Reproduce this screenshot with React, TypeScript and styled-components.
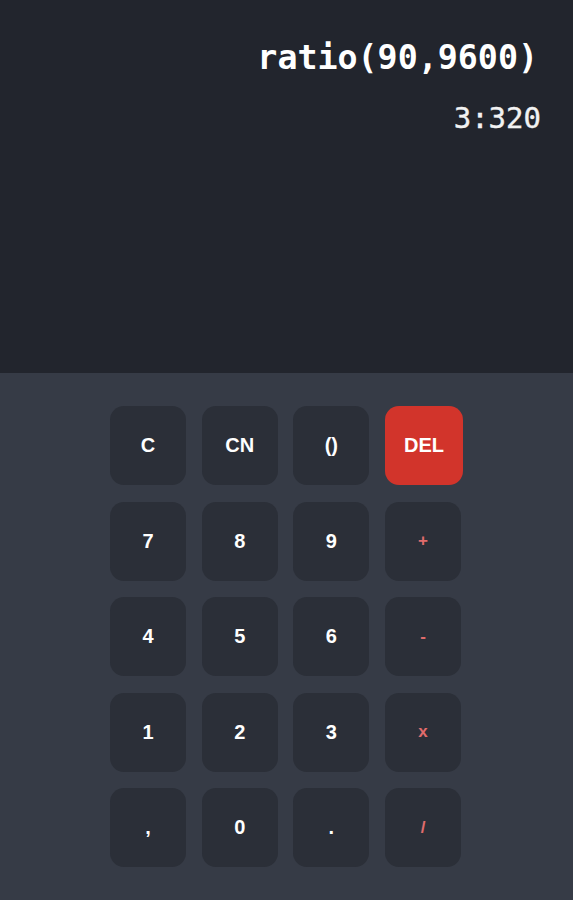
import styled, { createGlobalStyle } from "styled-components";

const GlobalStyle = createGlobalStyle`
  html, body {
    margin: 0;
    padding: 0;
    background: #363b46;
  }
  #root {
    min-height: 100vh;
  }
`;

const Screen = styled.div`
  width: 573px;
  height: 900px;
  display: flex;
  flex-direction: column;
  background: #363b46;
  overflow: hidden;
`;

const Display = styled.div`
  height: 373px;
  background: #22252d;
  display: flex;
  flex-direction: column;
  align-items: flex-end;
  padding: 38px 35px 0 0;
  box-sizing: border-box;
`;

const Expression = styled.div`
  font-family: "DejaVu Sans Mono", "Liberation Mono", monospace;
  font-weight: bold;
  font-size: 33.3px;
  color: #ffffff;
  line-height: 40px;
`;

const Result = styled.div`
  font-family: "DejaVu Sans Mono", "Liberation Mono", monospace;
  font-size: 29px;
  color: #f2f2f2;
  line-height: 34px;
  margin-top: 23px;
  margin-right: -3px;
  -webkit-text-stroke: 0.4px #f2f2f2;
`;

const Keypad = styled.div`
  display: grid;
  grid-template-columns: repeat(4, 76px);
  grid-auto-rows: 79px;
  column-gap: 15.7px;
  row-gap: 16.5px;
  justify-content: start;
  padding: 33px 0 0 110px;
`;

type KeyKind = "num" | "op" | "del";

const Key = styled.button<{ $kind: KeyKind }>`
  border: none;
  border-radius: 14px;
  background: ${(p) => (p.$kind === "del" ? "#d2342b" : "#2b2f38")};
  color: ${(p) => (p.$kind === "op" ? "#e06c6c" : "#ffffff")};
  font-family: "Liberation Sans", Arial, sans-serif;
  font-weight: bold;
  font-size: ${(p) => (p.$kind === "op" ? "17px" : "20px")};
  display: flex;
  align-items: center;
  justify-content: center;
  padding: 0;
  cursor: pointer;
  ${(p) => (p.$kind === "del" ? "width: 78px;" : "")}
`;

const keys: { label: string; kind: KeyKind }[] = [
  { label: "C", kind: "num" },
  { label: "CN", kind: "num" },
  { label: "()", kind: "num" },
  { label: "DEL", kind: "del" },
  { label: "7", kind: "num" },
  { label: "8", kind: "num" },
  { label: "9", kind: "num" },
  { label: "+", kind: "op" },
  { label: "4", kind: "num" },
  { label: "5", kind: "num" },
  { label: "6", kind: "num" },
  { label: "-", kind: "op" },
  { label: "1", kind: "num" },
  { label: "2", kind: "num" },
  { label: "3", kind: "num" },
  { label: "x", kind: "op" },
  { label: ",", kind: "num" },
  { label: "0", kind: "num" },
  { label: ".", kind: "num" },
  { label: "/", kind: "op" },
];

export default function App() {
  return (
    <>
      <GlobalStyle />
      <Screen>
        <Display>
          <Expression>ratio(90,9600)</Expression>
          <Result>3:320</Result>
        </Display>
        <Keypad>
          {keys.map((k) => (
            <Key key={k.label} $kind={k.kind}>
              {k.label}
            </Key>
          ))}
        </Keypad>
      </Screen>
    </>
  );
}
